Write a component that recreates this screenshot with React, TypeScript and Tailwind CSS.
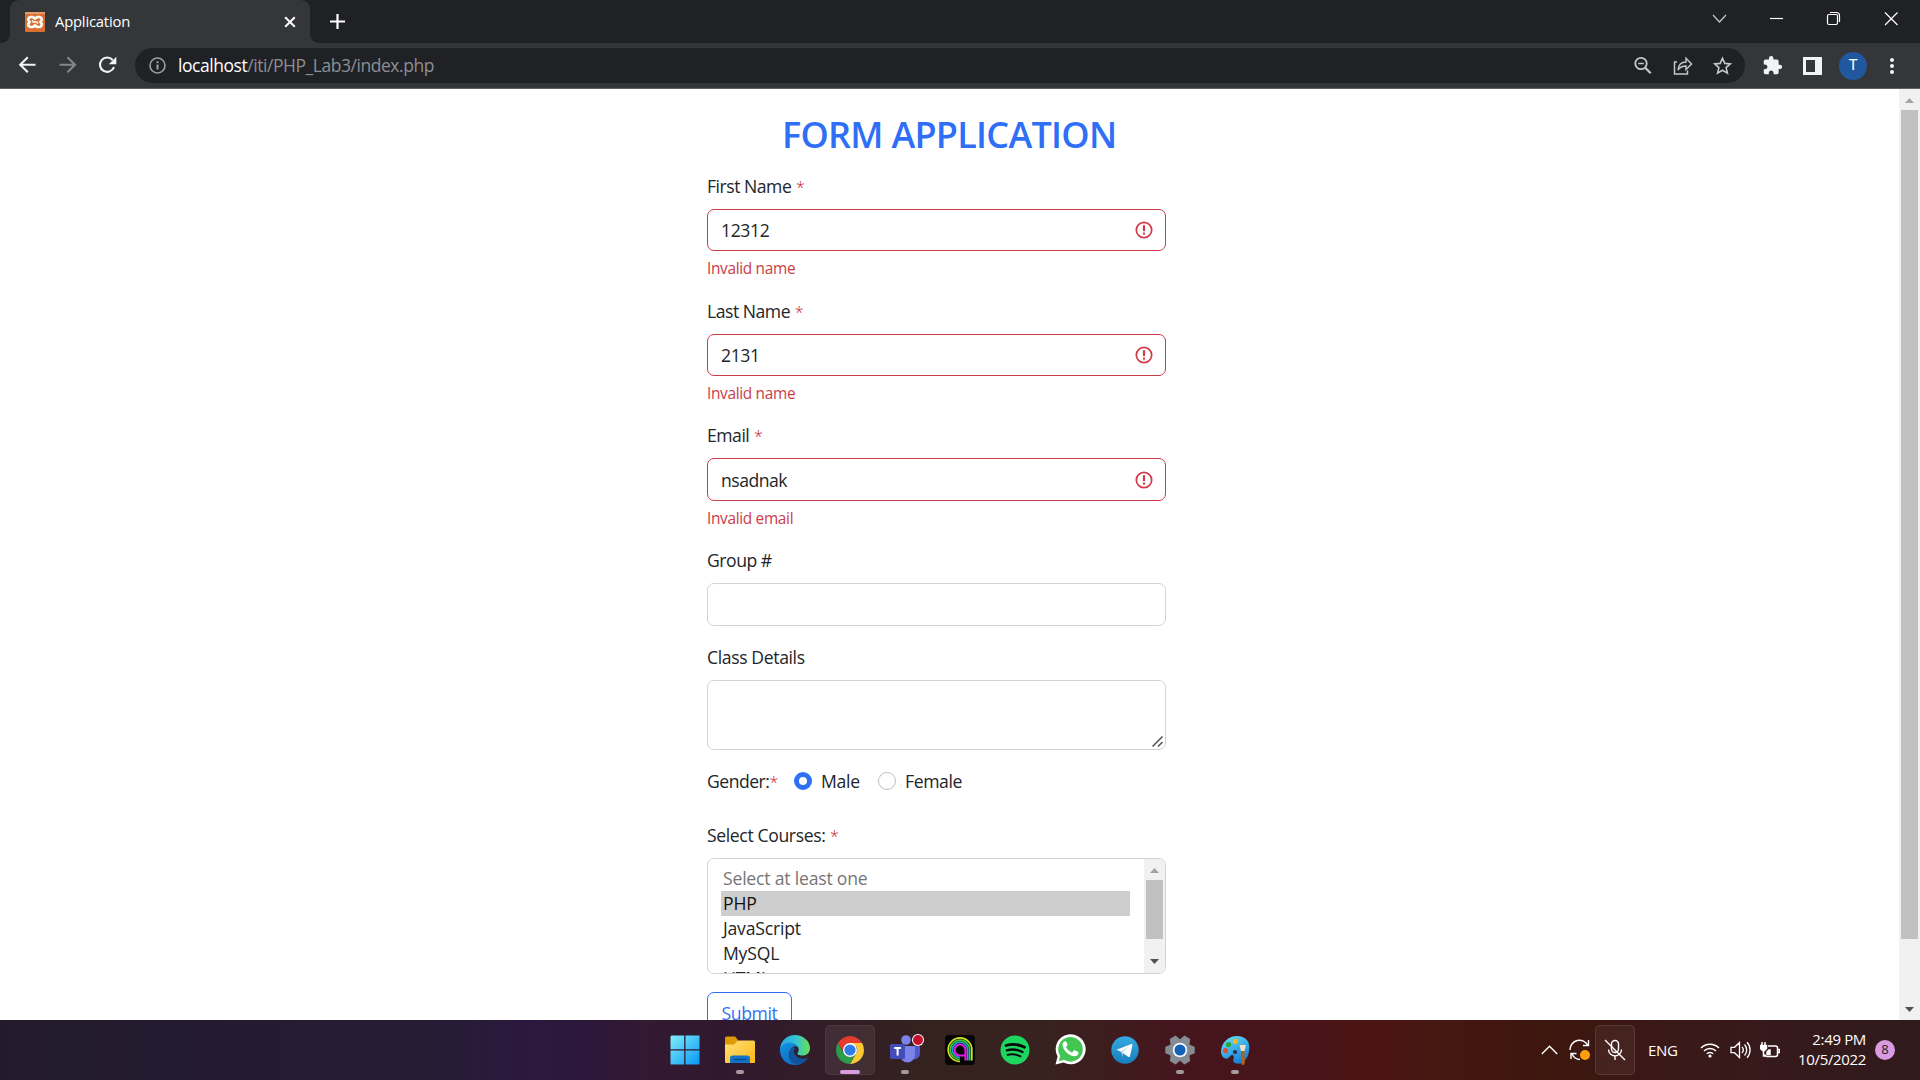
import React from "react";

const ui = "font-['Open_Sans','Noto_Sans',sans-serif]";

function Star() {
  return <span className="text-[16px] font-light text-[#c8202f]">*</span>;
}

function Label({ text, star, ls = "tracking-[-0.48px]" }: { text: string; star?: boolean; ls?: string }) {
  return (
    <div className="h-[26px] whitespace-pre text-[17.6px] leading-[26px]">
      <span className={ls}>{text}</span>
      {star && <> <Star /></>}
    </div>
  );
}

function Alert() {
  return (
    <svg width="18" height="18" viewBox="0 0 18 18" fill="none" stroke="#d03b48">
      <circle cx="9" cy="9" r="7.7" strokeWidth="1.7" />
      <path d="M9 4.2v6" strokeWidth="2.2" />
      <path d="M9 11.6v2" strokeWidth="2.2" />
    </svg>
  );
}

function InvalidField({ label, value, error, h = "h-[42px]", ls }: { label: string; value: string; error: string; h?: string; ls: string }) {
  return (
    <div>
      <Label text={label} star />
      <div className={`mt-[10px] flex items-center justify-between rounded-[7px] border border-[#cb3c47] pl-[13px] pr-[12px] ${h}`}>
        <span className={`text-[17.6px] leading-[26px] ${ls}`}>{value}</span>
        <Alert />
      </div>
      <div className="mt-[6px] h-[23px] text-[15.4px] leading-[24px] tracking-[-0.32px] text-[#cb3c47]">{error}</div>
    </div>
  );
}

function Chrome() {
  return (
    <div className="h-[89px] shrink-0 bg-[#35363a]">
      <div className="flex h-[43px] bg-[#202124]">
        <div className="relative flex w-[310px]">
          <svg width="320" height="43" className="absolute left-0 top-0" fill="#35363a">
            <path d="M0 43C6 43 10 39 10 33V10C10 4 14 0 20 0H300C306 0 310 4 310 10V33C310 39 314 43 320 43Z" />
          </svg>
          <div className="relative flex w-full items-center pl-[25px]">
            <svg width="20" height="20" viewBox="0 0 20 20">
              <rect width="20" height="20" rx="1" fill="#d9702f" />
              <rect width="20" height="2" fill="#e39a6c" />
              <path d="M5.600 5h2.200L10 6.600l2.200-1.600h2.200a2.500 2.500 0 0 1 1.600 4.300l-.7.700.7.700a2.500 2.500 0 0 1-1.600 4.300h-2.200L10 13.400l-2.200 1.600H5.600A2.500 2.500 0 0 1 4 10.700l.7-.7L4 9.300A2.500 2.500 0 0 1 5.600 5Z" fill="#d9702f" stroke="#fff" strokeWidth="2.600" strokeLinejoin="round" />
              <path d="M7.500 10h5M7.500 8v1.500M12.500 10.500V12" fill="none" stroke="#fff" strokeWidth="1.300" />
            </svg>
            <span className="ml-[10px] flex-1 text-[14.8px] tracking-[-0.2px] text-white">Application</span>
            <svg width="12" height="12" viewBox="0 0 12 12" stroke="#fff" strokeWidth="2" className="mr-[14px]">
              <path d="M1.2 1.2l9.6 9.6M10.8 1.2L1.2 10.8" />
            </svg>
          </div>
        </div>
        <svg width="15" height="15" viewBox="0 0 15 15" stroke="#fff" strokeWidth="2.2" className="ml-[20px] mt-[14px]">
          <path d="M7.5 0v15M0 7.5h15" />
        </svg>
        <div className="flex-1" />
        <svg width="208" height="43" viewBox="1712 0 208 43" fill="none" stroke="#fff" strokeWidth="1.2">
          <path d="M1713 15l6.5 7 6.5-7" stroke="#c8c9ca" />
          <path d="M1770 18.5h13" />
          <rect x="1827.5" y="14.5" width="10" height="10" rx="1.5" />
          <path d="M1830 12.5h6.500a3 3 0 0 1 3 3v6.500" />
          <path d="M1885 12.500l12.500 12.500M1897.500 12.500l-12.500 12.500" />
        </svg>
      </div>
      <div className="flex h-[46px] items-start border-b border-[#5f6063] pt-[5px]">
        <svg width="135" height="35" viewBox="0 48 135 35" fill="none" strokeWidth="2.1">
          <path d="M35.500 64.700H20.500M27.800 57.200L20.200 64.700l7.600 7.600" stroke="#f1f3f4" />
          <path d="M59.500 64.700H74.500M67.500 57.200L75 64.700l-7.500 7.600" stroke="#85868a" />
          <path d="M112.700 60A7.200 7.200 0 1 0 114 67" stroke="#f1f3f4" />
          <path d="M116.300 56.700v7.500h-7.500Z" fill="#f1f3f4" stroke="none" />
        </svg>
        <div className="flex h-[35px] w-[1610px] items-center rounded-full bg-[#202124] pl-[14px] pr-[13px]">
          <svg width="17" height="17" viewBox="0 0 17 17" fill="none" stroke="#9aa0a6" strokeWidth="1.6">
            <circle cx="8.500" cy="8.500" r="7.500" />
            <path d="M8.500 7.500v5M8.500 4.300v2" strokeWidth="2" />
          </svg>
          <span className="ml-[12px] flex-1 text-[17.5px] tracking-[-0.450px] text-[#8b8f94]">
            <span className="text-white">localhost</span>/iti/PHP_Lab3/index.php
          </span>
          <svg width="98" height="20" viewBox="1634 56 98 20" fill="none" stroke="#c4c7c5" strokeWidth="1.800">
            <circle cx="1641" cy="63.500" r="5.700" />
            <path d="M1645.200 67.700l5.500 5.500" strokeWidth="2.200" />
            <path d="M1638.200 63.500h5.600" strokeWidth="1.500" />
            <path d="M1677 62h-2.500v12h13v-3.500" strokeWidth="1.500" />
            <path d="M1678 70c.5-5 3-8 8-8v-3.800l5.600 5.700-5.600 5.600V66c-3.500 0-6 1-8 4Z" strokeWidth="1.400" />
            <path d="M1722.500 58.200l2.300 5.200 5.500.5-4.200 3.700 1.300 5.500-4.900-2.900-4.900 2.900 1.300-5.500-4.200-3.700 5.500-.5Z" strokeWidth="1.600" />
          </svg>
        </div>
        <div className="flex h-[35px] flex-1 items-center">
          <svg width="21" height="21" viewBox="0 0 24 24" fill="#f1f3f4" className="ml-[17px]">
            <path d="M20.500 11H19V7c0-1.100-.9-2-2-2h-4V3.500a2.500 2.500 0 0 0-5 0V5H4c-1.100 0-1.990.9-1.990 2v3.800H3.500c1.490 0 2.700 1.210 2.700 2.700s-1.210 2.700-2.700 2.700H2V20c0 1.100.9 2 2 2h3.800v-1.500c0-1.490 1.210-2.700 2.700-2.700s2.700 1.210 2.700 2.700V22H17c1.100 0 2-.9 2-2v-4h1.500a2.500 2.500 0 0 0 0-5z" />
          </svg>
          <svg width="19" height="18" viewBox="0 0 19 18" className="ml-[20px]">
            <path d="M0 0h19v18H0ZM3 3v12h9V3Z" fill="#f1f3f4" fillRule="evenodd" />
          </svg>
          <div className="ml-[17px] flex h-[28px] w-[28px] items-center justify-center rounded-full bg-[#21579c] font-['Roboto',sans-serif] text-[15.500px] text-white">T</div>
          <svg width="6" height="18" viewBox="0 0 6 18" fill="#f1f3f4" className="ml-[22px]">
            <circle cx="3" cy="3" r="2" /><circle cx="3" cy="9" r="2" /><circle cx="3" cy="15" r="2" />
          </svg>
        </div>
      </div>
    </div>
  );
}

function Radio({ on }: { on?: boolean }) {
  return on ? (
    <span className="h-[18px] w-[18px] shrink-0 rounded-full border-[5px] border-[#2f6ff6] bg-white" />
  ) : (
    <span className="h-[18px] w-[18px] shrink-0 rounded-full border border-[#bfbfbf] bg-white" />
  );
}

function Form() {
  return (
    <div className="w-[459px] text-[#212529]">
      <InvalidField label="First Name" value="12312" error="Invalid name" ls="tracking-[-0.400px]" />
      <div className="h-[18px]" />
      <InvalidField label="Last Name" value="2131" error="Invalid name" ls="tracking-[-0.400px]" />
      <div className="h-[17px]" />
      <InvalidField label="Email" value="nsadnak" error="Invalid email" h="h-[43px]" ls="tracking-[-0.500px]" />
      <div className="h-[17px]" />
      <Label text="Group #" />
      <div className="mt-[10px] h-[43px] rounded-[7px] border border-[#ced4da]" />
      <div className="mt-[18px]"><Label text="Class Details" ls="tracking-[-0.380px]" /></div>
      <div className="mt-[10px] flex h-[70px] items-end justify-end rounded-[7px] border border-[#ced4da] p-[2px]">
        <svg width="11" height="11" viewBox="0 0 11 11" stroke="#505050" strokeWidth="1.500">
          <path d="M.5 10.500l10-10M6 10.500l4.500-4.500" />
        </svg>
      </div>
      <div className="mt-[18px] flex h-[26px] items-center text-[17.600px] leading-[26px] tracking-[-0.500px]">
        <span className="w-[87px] pt-[0.600px]">Gender:<Star /></span>
        <Radio on />
        <span className="ml-[9px] w-[57px] pt-[0.600px] tracking-[-0.300px]">Male</span>
        <Radio />
        <span className="ml-[9px] pt-[0.600px] tracking-[-0.400px]">Female</span>
      </div>
      <div className="mt-[28px]"><Label text="Select Courses:" star ls="tracking-[-0.370px]" /></div>
      <div className="mt-[10px] flex h-[116px] overflow-hidden rounded-[7px] border border-[#ced4da]">
        <div className="flex-1 pl-[13px] pr-[14px] pt-[7px] text-[17.600px] leading-[24px] tracking-[-0.200px]">
          <div className="h-[25px] pl-[2px] text-[#757575]">Select at least one</div>
          <div className="h-[25px] bg-[#cecece] pl-[2px] text-[#101010]">PHP</div>
          <div className="h-[25px] pl-[2px]">JavaScript</div>
          <div className="h-[25px] pl-[2px]">MySQL</div>
          <div className="h-[25px] pl-[2px] leading-[24px]">HTML</div>
        </div>
        <div className="flex w-[21px] flex-col items-center bg-[#f1f1f1]">
          <svg width="9" height="5" className="mt-[9px]"><path d="M0 5L4.500 0L9 5Z" fill="#a3a3a3" /></svg>
          <div className="mt-[7px] h-[59px] w-[17px] bg-[#c1c1c1]" />
          <svg width="9" height="5" className="mt-[20px]"><path d="M0 0H9L4.500 5Z" fill="#505050" /></svg>
        </div>
      </div>
      <div className="mt-[18px] h-[42px] w-[85px] rounded-[7px] border border-[#2f6ff6] pt-[8px] text-center text-[17.600px] leading-[25px] tracking-[-0.350px] text-[#2f6ff6]">Submit</div>
    </div>
  );
}

function Slot({ children, active, bar }: { children: React.ReactNode; active?: boolean; bar?: "wide" | "dot" }) {
  return (
    <div className={`flex h-[50px] w-[50px] flex-col items-center rounded-[5px] border pt-[8px] ${active ? "border-white/5 bg-white/[0.07]" : "border-transparent"}`}>
      <div className="flex h-[31px] items-center">{children}</div>
      {bar === "wide" && <div className="mt-[5px] h-[4px] w-[20px] shrink-0 rounded-full bg-[#d99ae2]" />}
      {bar === "dot" && <div className="mt-[5px] h-[4px] w-[8px] shrink-0 rounded-full bg-[#a39a9e]" />}
    </div>
  );
}

function Taskbar() {
  return (
    <div className="flex h-[60px] shrink-0 items-center bg-[linear-gradient(90deg,#231b2d_0px,#251c34_420px,#2b193d_520px,#2c173a_590px,#331932_640px,#30192f_720px,#34221f_930px,#38221f_1050px,#45151d_1180px,#48141b_1280px,#4b1413_1370px,#451711_1440px,#3d170f_1560px,#39191a_1700px,#301a1c_1920px)]">
      <div className="ml-[660px] flex gap-[5px]">
        <Slot>
          <svg width="30" height="30" viewBox="0 0 30 30">
            <defs><linearGradient id="win" x1="0" y1="0" x2="1" y2="1"><stop offset="0" stopColor="#80eefd" /><stop offset="1" stopColor="#0896f5" /></linearGradient></defs>
            <path d="M1.500.5H14.200V14.200H.5V1.500ZM15.500.5H29.500V14.200H15.500ZM.5 15.500H14.200V29.500H.5ZM15.500 15.500H29.500V29.500H15.500Z" fill="url(#win)" />
          </svg>
        </Slot>
        <Slot bar="dot">
          <svg width="30" height="28" viewBox="0 0 30 28">
            <defs><linearGradient id="fold" x1="0" y1="0" x2="1" y2="1"><stop offset="0" stopColor="#ffe07a" /><stop offset="1" stopColor="#fbb913" /></linearGradient></defs>
            <path d="M0 2a1.500 1.500 0 0 1 1.500-1.500H10l3 3.500v6H0Z" fill="#dc9a06" />
            <path d="M0 8.500h9L13 4.500h15.500A1.500 1.500 0 0 1 30 6v20a1 1 0 0 1-1 1H1a1 1 0 0 1-1-1Z" fill="url(#fold)" />
            <path d="M5 27v-5a2.500 2.500 0 0 1 2.500-2.500h15A2.500 2.500 0 0 1 25 22v5Z" fill="#1273c7" />
            <path d="M9 23.500h12" stroke="#0b4c8c" strokeWidth="1.500" strokeLinecap="round" />
          </svg>
        </Slot>
        <Slot>
          <svg width="30" height="30" viewBox="0 0 30 30">
            <defs>
              <linearGradient id="eg1" x1="0" y1=".4" x2="1" y2=".4"><stop offset="0" stopColor="#2ba6e4" /><stop offset=".55" stopColor="#35c5d0" /><stop offset="1" stopColor="#6be04e" /></linearGradient>
              <linearGradient id="eg2" x1="0" y1="0" x2=".5" y2="1"><stop offset="0" stopColor="#1592e0" /><stop offset="1" stopColor="#0f6cc4" /></linearGradient>
            </defs>
            <path d="M0 15C0 6 7 0 15 0s15 6 15 13c0 5-3.500 7.500-7.500 7.500-4 0-5.500-1.500-5-2.500 2-2 2-8-4-8C7 10 2 13 0 15Z" fill="url(#eg1)" />
            <path d="M0 15C1 10 5 7.500 9.500 7.500c5.500 0 9.500 4 9.500 7-1-3-3-3.500-5-3-5 2-4 10 1 14 3 2.500 6 2.500 8 2-2 1.700-5 2.500-8 2.500C7 30 0 24 0 15Z" fill="url(#eg2)" />
            <path d="M13 12c-6 3-6 12 0 16 6 3.500 12 0 15-5.500-6 3-12 0-13.500-4-.8-2-.5-4 .5-5Z" fill="#12519b" />
          </svg>
        </Slot>
        <Slot active bar="wide">
          <svg width="28" height="28" viewBox="0 0 28 28">
            <path d="M14 14V7H26.120A14 14 0 0 1 14 28L20.060 17.500A7 7 0 0 0 20 10Z" fill="#fcc934" />
            <path d="M14 28A14 14 0 0 1 1.880 7L7.940 17.500A7 7 0 0 0 17 20.300L20.060 17.500Z" fill="#2a9c4a" />
            <path d="M1.880 7A14 14 0 0 1 26.120 7H14A7 7 0 0 0 7.500 16Z" fill="#e33b2e" />
            <circle cx="14" cy="14" r="7" fill="#fff" />
            <circle cx="14" cy="14" r="5.600" fill="#2f7ce8" />
          </svg>
        </Slot>
        <Slot bar="dot">
          <svg width="34" height="31" viewBox="0 -1 34 31" className="ml-[4px]">
            <path d="M20 11h9a1 1 0 0 1 1 1v7a6 6 0 0 1-9 4.500Z" fill="#5059c9" />
            <circle cx="16" cy="5" r="4.800" fill="#7b83eb" />
            <path d="M10 11h14a1 1 0 0 1 1 1v8a7.500 7.500 0 0 1-15 0Z" fill="#7b83eb" />
            <rect x="0" y="9" width="15" height="15" rx="1.500" fill="#444cb8" />
            <path d="M4.300 13h6.600M7.600 13v7.500" stroke="#fff" strokeWidth="2" fill="none" />
            <circle cx="28" cy="5" r="6" fill="#fff" /><circle cx="28" cy="5" r="5" fill="#c50f2e" />
          </svg>
        </Slot>
        <Slot>
          <svg width="30" height="30" viewBox="0 0 30 30" fill="none" strokeWidth="1.700">
            <rect width="30" height="30" rx="4" fill="#050505" />
            <path d="M26.800 25.500V15A11.800 11.800 0 1 0 15 26.500" stroke="#d6e021" />
            <path d="M24.700 25.500V15A9.700 9.700 0 1 0 15 24.500" stroke="#35c72f" />
            <path d="M22.700 25.500V15A7.700 7.700 0 1 0 15 22.500" stroke="#18a5c9" />
            <path d="M20.500 25.500V15A5.500 5.500 0 1 0 15 20.500h5" stroke="#e01be0" strokeWidth="2.200" />
          </svg>
        </Slot>
        <Slot>
          <svg width="30" height="30" viewBox="0 0 30 30" fill="none" stroke="#0a0a0a" strokeLinecap="round">
            <circle cx="15" cy="15" r="14.500" fill="#1ed760" stroke="none" />
            <path d="M6 10.500c6-1.800 13-1.200 18.500 1.800" strokeWidth="2.800" />
            <path d="M6.800 15.300c5.500-1.500 11-.8 15.700 1.800" strokeWidth="2.300" />
            <path d="M7.500 19.800c5-1.200 9-.5 13 1.600" strokeWidth="1.900" />
          </svg>
        </Slot>
        <Slot>
          <svg width="31" height="31" viewBox="0 0 31 31">
            <path d="M.5 30.500l2.100-7.900A15 15 0 1 1 8.500 28.400Z" fill="#fff" />
            <path d="M3.800 27.200l1.400-5.100A12.300 12.300 0 1 1 9 25.800Z" fill="#43c554" />
            <path d="M11.500 8.200c-.5-1-1-.9-1.500-.9-1 0-2.500 1.200-2.500 3.500 0 4.500 6 11.500 12 11.500 2.500 0 4-1.500 4-3.500 0-.7-.1-.8-.7-1.100l-3-1.500c-.5-.2-.8-.1-1.100.3l-1.300 1.700c-.3.300-.5.300-1 .1-2-.8-4.200-2.900-5.200-4.800-.2-.4-.1-.7.2-1l1-1.300c.2-.3.2-.6.1-.9Z" fill="#fff" />
          </svg>
        </Slot>
        <Slot>
          <svg width="28" height="28" viewBox="0 0 28 28">
            <defs><linearGradient id="tg" x1="0" y1="0" x2="0" y2="1"><stop offset="0" stopColor="#36a9e2" /><stop offset="1" stopColor="#1580bd" /></linearGradient></defs>
            <circle cx="14" cy="14" r="13.700" fill="url(#tg)" />
            <path d="M5.500 13.700L20.300 8c.8-.2 1.300.2 1.100 1.200L19 20.300c-.2.900-.8 1-1.500.6l-7.500-5.200Z" fill="#fff" />
            <path d="M10 15.700l8-5.700-6.300 7 .1 4Z" fill="#c5dcec" />
          </svg>
        </Slot>
        <Slot bar="dot">
          <svg width="30" height="30" viewBox="-15 -15 30 30">
            <g fill="#858b93">
              <circle r="11" />
              {[30, 90, 150, 210, 270, 330].map((a) => (
                <path key={a} d="M-5.500 -9L-3.300 -14.700H3.300L5.500 -9Z" transform={`rotate(${a})`} />
              ))}
            </g>
            <circle r="7.300" fill="#f3f5f7" /><circle r="5.500" fill="#1162b8" />
          </svg>
        </Slot>
        <Slot bar="dot">
          <svg width="30" height="30" viewBox="0 0 30 30">
            <defs><linearGradient id="pal" x1=".2" y1="0" x2=".7" y2="1"><stop offset="0" stopColor="#62dcf8" /><stop offset="1" stopColor="#1579d4" /></linearGradient></defs>
            <path d="M1 17C1 8 8 1 17 1c8 0 13 5 12.300 13-.5 6-2.500 10-6 13-3 2.500-8 2-9.500 0-1.500-2 1-5-.5-6.500-1.500-1.500-3 .5-5 2.500S1.300 22.500 1 17Z" fill="url(#pal)" />
            <circle cx="5.500" cy="15.500" r="2.600" fill="#e0512a" /><circle cx="8.500" cy="9.500" r="2.600" fill="#2fa338" /><circle cx="15.500" cy="6.300" r="2.600" fill="#f5b81c" /><circle cx="15" cy="17" r="2.100" fill="#23314a" />
            <path d="M19.500 10h6.500l-1.500 6h-3.500Z" fill="#f0dfc4" /><path d="M21 16h3.500l.3 12a1.800 1.800 0 0 1-3.800 0Z" fill="#a8641c" />
          </svg>
        </Slot>
      </div>
      <div className="flex flex-1 items-center justify-end text-white">
        <svg width="17" height="10" viewBox="0 0 17 10" fill="none" stroke="#fff" strokeWidth="1.400"><path d="M.8 9L8.500 1.200L16.200 9" /></svg>
        <svg width="22" height="22" viewBox="0 0 22 22" fill="none" stroke="#fff" strokeWidth="1.400" className="ml-[11px]">
          <path d="M1 11a9.500 9.500 0 0 1 18-4.500M19.500 1v5.500H14M11 20.500a9.500 9.500 0 0 1-8-5.500M2 20v-5.500h5.500" />
          <circle cx="16" cy="16" r="5" fill="#ff9d0a" stroke="none" />
        </svg>
        <div className="ml-[4px] flex h-[50px] w-[40px] items-center justify-center rounded-[5px] border border-white/10 bg-white/5">
          <svg width="22" height="22" viewBox="0 0 22 22" fill="none" stroke="#fff" strokeWidth="1.400">
            <rect x="7.500" y="1.500" width="7" height="12" rx="3.500" />
            <path d="M4.500 10.500a6.500 6.500 0 0 0 13 0M11 17v4M1 1l20 20" />
          </svg>
        </div>
        <span className="ml-[13px] w-[52px] text-[15px] tracking-[-0.350px]">ENG</span>
        <svg width="20" height="16" viewBox="0 0 20 16" fill="none" stroke="#fff" strokeWidth="1.500">
          <path d="M1 6a12.700 12.700 0 0 1 18 0M4 9a8.500 8.500 0 0 1 12 0M6.800 11.800a4.500 4.500 0 0 1 6.400 0" /><circle cx="10" cy="14" r="1.600" fill="#fff" stroke="none" />
        </svg>
        <svg width="21" height="18" viewBox="0 0 21 18" fill="none" stroke="#fff" strokeWidth="1.300" className="ml-[10px]">
          <path d="M1 6.300h3.500L9.500 1.500v15L4.500 11.700H1ZM12 6a4.500 4.500 0 0 1 0 6M14.500 3.500a8 8 0 0 1 0 11M17 1.200a11.500 11.500 0 0 1 0 15.600" />
        </svg>
        <svg width="20" height="17" viewBox="0 0 20 17" fill="none" stroke="#fff" strokeWidth="1.500" className="ml-[9px]">
          <path d="M8 4h7.500a2 2 0 0 1 2 2v6.500a2 2 0 0 1-2 2H7a2 2 0 0 1-2-2M18 7.500h1.500v3H18M3.500 8v6h2" /><path d="M7 12.500V10l2-2h1v4.500Z" fill="#fff" />
          <path d="M.5 3.500h6v3l-2 2h-2l-2-2ZM2 0v3M5 0v3" fill="#fff" />
        </svg>
        <div className="w-[86px] pb-[2px] text-right text-[15px] leading-[20px] tracking-[-0.350px]">
          <div>2:49 PM</div><div>10/5/2022</div>
        </div>
        <div className="ml-[9px] mr-[25px] flex h-[20px] w-[20px] items-center justify-center rounded-full bg-[#d99ae2] text-[13px] text-[#222]">8</div>
      </div>
    </div>
  );
}

export default function App() {
  return (
    <div className={`flex h-[1080px] w-[1920px] flex-col overflow-hidden bg-white ${ui}`}>
      <Chrome />
      <div className="flex h-[931px] shrink-0 overflow-hidden">
        <div className="flex-1 pl-[707px]">
          <h1 className="ml-[75px] mt-[24px] h-[44px] whitespace-nowrap text-[36px] font-semibold leading-[44px] tracking-[-0.730px] text-[#2f6ff6]">FORM APPLICATION</h1>
          <div className="h-[16px]" />
          <Form />
        </div>
        <div className="flex w-[21px] flex-col items-center bg-[#f1f1f1]">
          <svg width="9" height="5" className="mt-[9px]"><path d="M0 5L4.500 0L9 5Z" fill="#a3a3a3" /></svg>
          <div className="mt-[7px] h-[829px] w-[17px] bg-[#c1c1c1]" />
          <div className="flex-1" />
          <svg width="9" height="5" className="mb-[8px]"><path d="M0 0H9L4.500 5Z" fill="#505050" /></svg>
        </div>
      </div>
      <Taskbar />
    </div>
  );
}
